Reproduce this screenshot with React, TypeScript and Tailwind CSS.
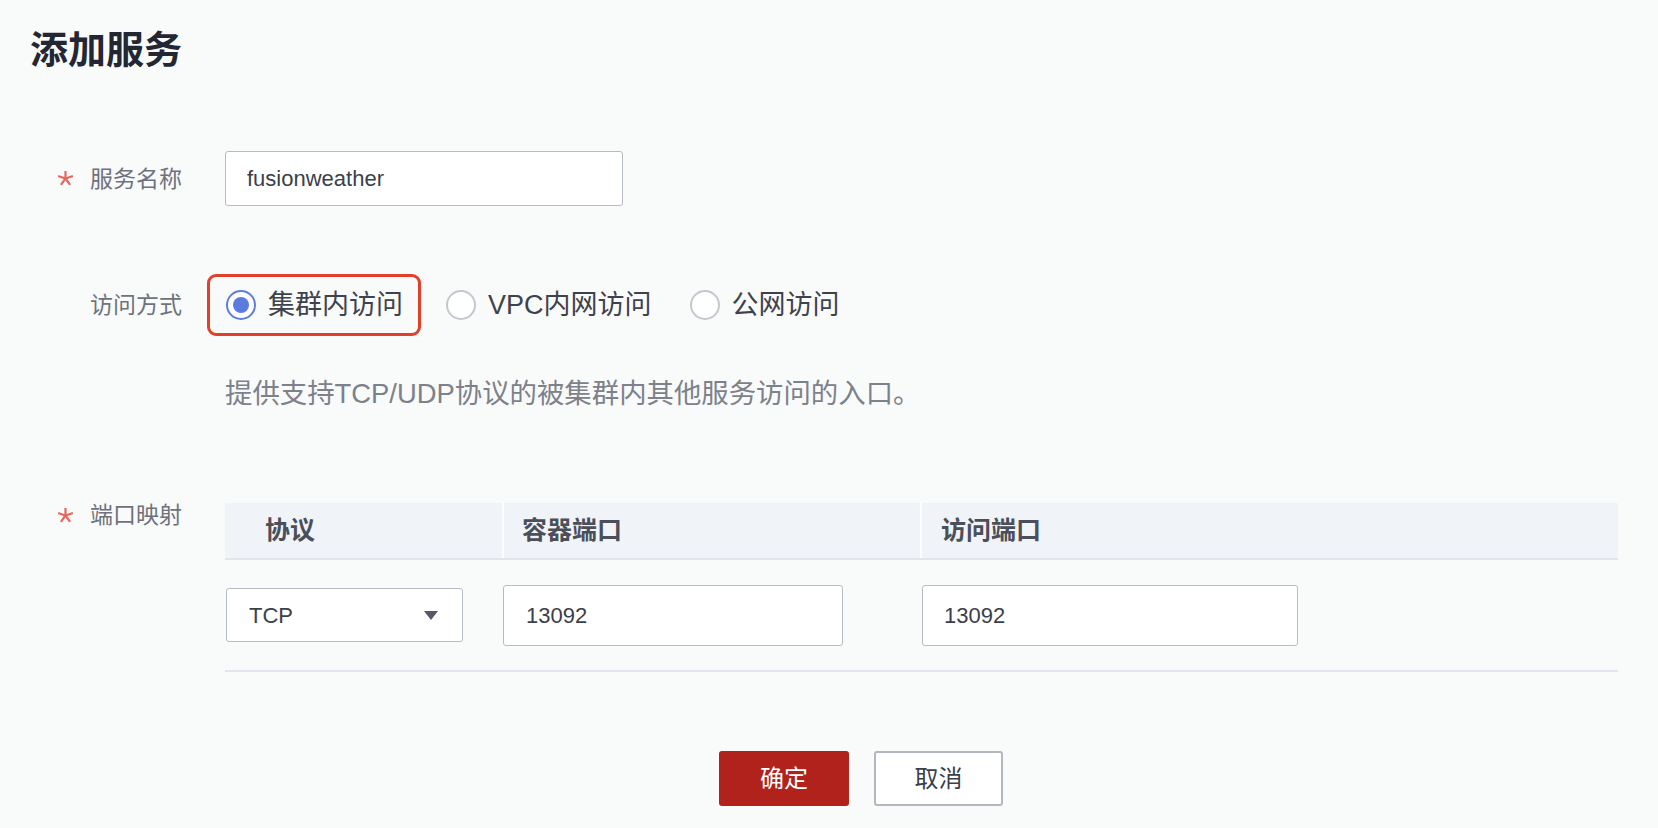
const font = "font-['Liberation_Sans','Noto_Sans_CJK_SC',sans-serif]";

function Radio({ checked, label }: { checked?: boolean; label: string }) {
  return (
    <label className="flex items-center gap-[12px]">
      <span
        className={
          checked
            ? 'flex h-[30px] w-[30px] items-center justify-center rounded-full border-2 border-[#5e7ce0] bg-white'
            : 'flex h-[30px] w-[30px] items-center justify-center rounded-full border-2 border-[#c4c7cd] bg-white'
        }
      >
        {checked && <span className="h-[16px] w-[16px] rounded-full bg-[#5b7be0]" />}
      </span>
      <span className="text-[27px] leading-[36px] text-[#3e424d]">{label}</span>
    </label>
  );
}

// 红色必填星号
function Star() {
  return (
    <svg width="15" height="15" viewBox="-7.5 -7.5 15 15" className="ml-[1px]">
      <g stroke="#e8675d" strokeWidth="2.2" strokeLinecap="round">
        <line x1="0" y1="0" x2="0" y2="-7" />
        <line x1="0" y1="0" x2="6.7" y2="-2.2" />
        <line x1="0" y1="0" x2="-6.7" y2="-2.2" />
        <line x1="0" y1="0" x2="4.1" y2="5.7" />
        <line x1="0" y1="0" x2="-4.1" y2="5.7" />
      </g>
    </svg>
  );
}

function FieldLabel({ text, required }: { text: string; required?: boolean }) {
  return (
    <div className="flex w-[225px] shrink-0 items-center pl-[57px]">
      <span className="flex w-[33px] items-center">{required && <Star />}</span>
      <span className="text-[23px] leading-[24px] text-[#6d727d]">{text}</span>
    </div>
  );
}

export default function App() {
  return (
    <div className={`min-h-screen bg-[#f9fafa] ${font}`}>
      <h1 className="pl-[30px] pt-[27px] text-[38px] font-bold leading-[46px] text-[#232733]">添加服务</h1>

      {/* 服务名称 */}
      <div className="mt-[78px] flex items-center">
        <FieldLabel text="服务名称" required />
        <div className="flex h-[55px] w-[398px] items-center rounded-[3px] border border-[#b7bbc3] bg-white px-[21px] text-[22px] text-[#3b3f49]">
          fusionweather
        </div>
      </div>

      {/* 访问方式 */}
      <div className="mt-[68px] flex items-center">
        <FieldLabel text="访问方式" />
        <div className="flex items-center">
          <div className="-ml-[18px] flex h-[62px] items-center rounded-[9px] border-[3px] border-[#e2402b] pl-[16px] pr-[15px]">
            <Radio checked label="集群内访问" />
          </div>
          <div className="ml-[25px]">
            <Radio label="VPC内网访问" />
          </div>
          <div className="ml-[38px]">
            <Radio label="公网访问" />
          </div>
        </div>
      </div>
      <p className="mt-[40px] pl-[225px] text-[27.4px] leading-[36px] text-[#7c818b]">
        提供支持TCP/UDP协议的被集群内其他服务访问的入口。
      </p>

      {/* 端口映射 */}
      <div className="mt-[91px] flex items-start">
        <FieldLabel text="端口映射" required />
        <div className="w-[1393px]">
          <div className="flex h-[57px] items-center border-b-2 border-[#e1e5ec] bg-[#f0f3f8] text-[25px] font-bold text-[#4b4f59]">
            <div className="w-[277px] pl-[40px]">协议</div>
            <div className="flex h-full w-[418px] items-center border-l-2 border-white pl-[18px]">容器端口</div>
            <div className="flex h-full flex-1 items-center border-l-2 border-white pl-[19px]">访问端口</div>
          </div>
          <div className="flex h-[112px] items-center border-b-2 border-[#e1e5ec] text-[22px] text-[#3b3f49]">
            <div className="w-[277px] pl-[1px]">
              <div className="flex h-[54px] w-[237px] items-center justify-between rounded-[3px] border border-[#b7bbc3] bg-white pl-[22px] pr-[24px]">
                <span>TCP</span>
                <svg width="14" height="9" viewBox="0 0 14 9">
                  <polygon points="0,0 14,0 7,9" fill="#555a66" />
                </svg>
              </div>
            </div>
            <div className="w-[418px] pl-[1px]">
              <div className="flex h-[61px] w-[340px] items-center rounded-[3px] border border-[#b7bbc3] bg-white px-[22px]">13092</div>
            </div>
            <div className="flex-1 pl-[2px]">
              <div className="flex h-[61px] w-[376px] items-center rounded-[3px] border border-[#b7bbc3] bg-white px-[21px]">13092</div>
            </div>
          </div>
        </div>
      </div>

      {/* 按钮 */}
      <div className="mt-[79px] flex gap-[25px] pl-[719px]">
        <button className="h-[55px] w-[130px] rounded-[3px] bg-[#b1221c] text-[24px] text-white">确定</button>
        <button className="h-[55px] w-[129px] rounded-[3px] border-2 border-[#b3b7bf] bg-white text-[24px] text-[#3b3f49]">取消</button>
      </div>
    </div>
  );
}
